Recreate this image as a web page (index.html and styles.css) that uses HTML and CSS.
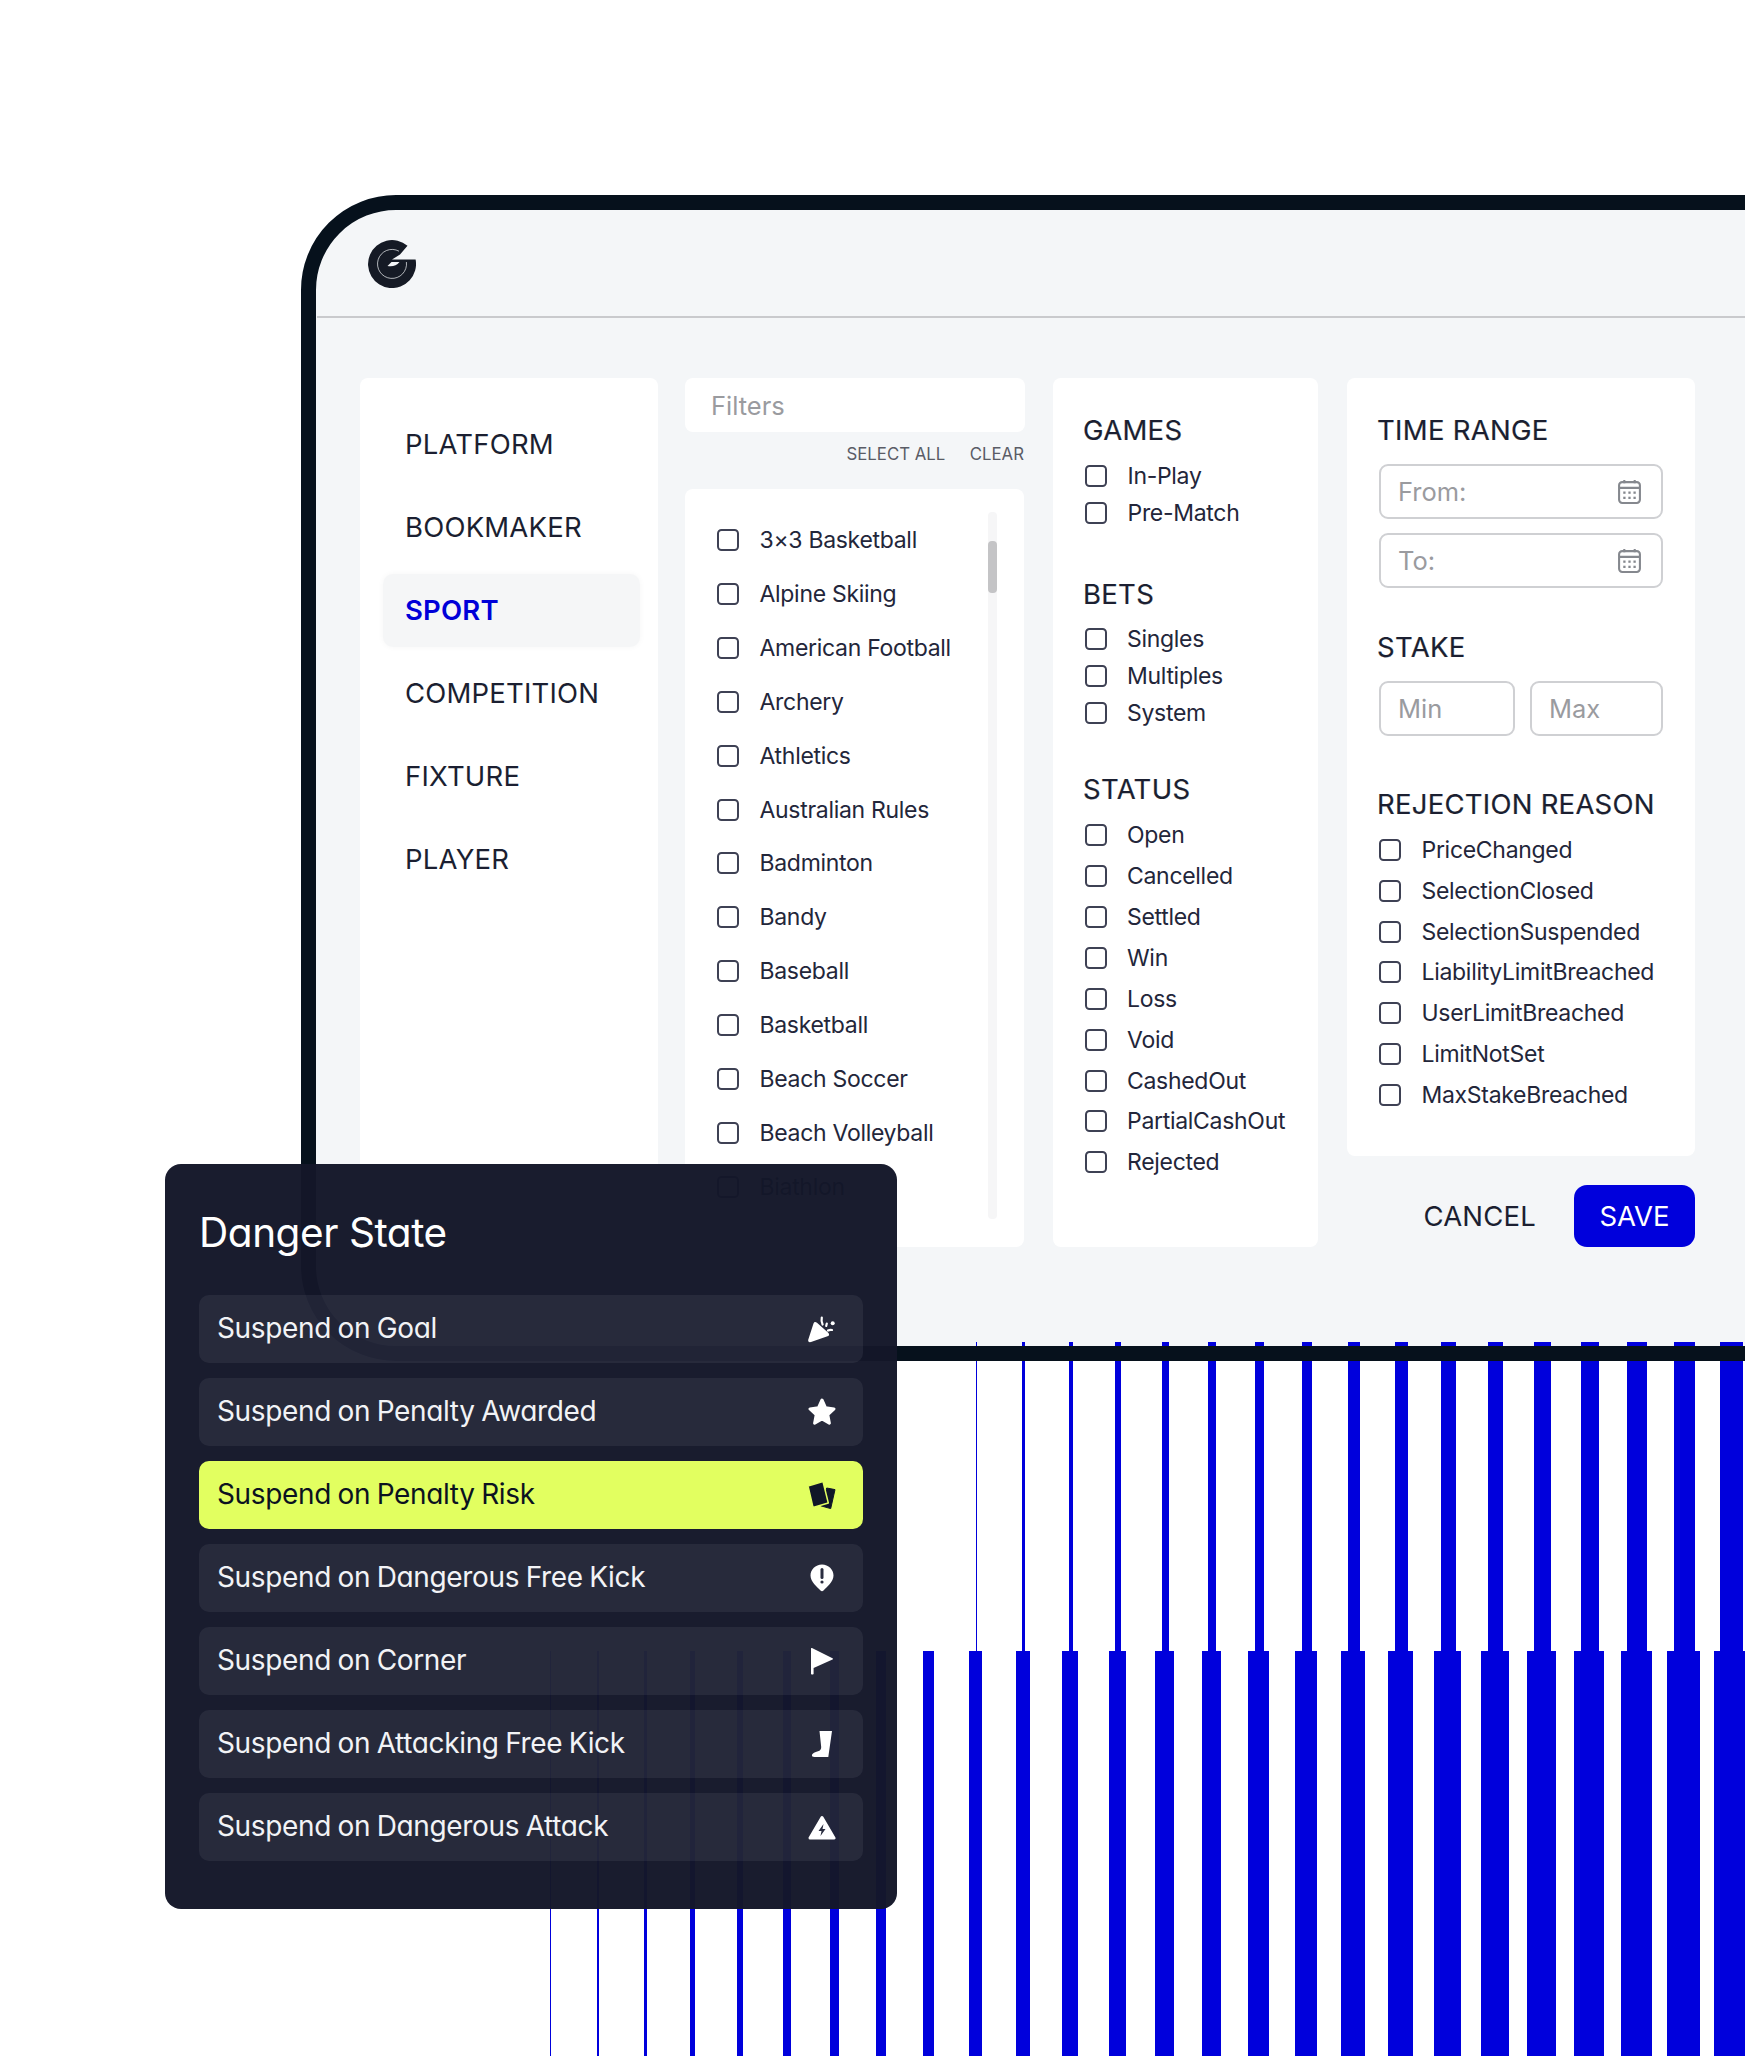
FILE: index.html
```html
<!DOCTYPE html>
<html lang="en">
<head>
<meta charset="utf-8">
<title>Danger State</title>
<link rel="stylesheet" href="styles.css">
</head>
<body>
<div class="stage">
  <div class="frame">
    <header class="topbar">
      <svg class="logo" viewBox="0 0 48 48" aria-hidden="true">
        <path class="logo-g" d="M39.5 5.7A24 24 0 1 0 47.6 19.5H24L32 14.5Z"/>
        <path class="logo-line" d="M31 11.2A14.5 14.5 0 1 0 38.4 22"/>
        <path class="logo-cut" d="M19.5 26L23.5 22H31.5Q27 27.5 19.5 26Z"/>
      </svg>
    </header>
    <main class="columns">
      <nav class="card nav">
        <a class="nav-item">PLATFORM</a>
        <a class="nav-item">BOOKMAKER</a>
        <a class="nav-item active">SPORT</a>
        <a class="nav-item">COMPETITION</a>
        <a class="nav-item">FIXTURE</a>
        <a class="nav-item">PLAYER</a>
      </nav>
      <section class="sports">
        <div class="filter-box">Filters</div>
        <div class="select-row"><span>SELECT ALL</span><span>CLEAR</span></div>
        <div class="card sport-list">
          <div class="scrollbar"><div class="thumb"></div></div>
          <label class="check sport"><i class="box"></i>3×3 Basketball</label>
          <label class="check sport"><i class="box"></i>Alpine Skiing</label>
          <label class="check sport"><i class="box"></i>American Football</label>
          <label class="check sport"><i class="box"></i>Archery</label>
          <label class="check sport"><i class="box"></i>Athletics</label>
          <label class="check sport"><i class="box"></i>Australian Rules</label>
          <label class="check sport"><i class="box"></i>Badminton</label>
          <label class="check sport"><i class="box"></i>Bandy</label>
          <label class="check sport"><i class="box"></i>Baseball</label>
          <label class="check sport"><i class="box"></i>Basketball</label>
          <label class="check sport"><i class="box"></i>Beach Soccer</label>
          <label class="check sport"><i class="box"></i>Beach Volleyball</label>
          <label class="check sport"><i class="box"></i>Biathlon</label>
        </div>
      </section>
      <section class="card types">
        <h2 class="head">GAMES</h2>
        <label class="check games"><i class="box"></i>In-Play</label>
        <label class="check games"><i class="box"></i>Pre-Match</label>
        <h2 class="head bets-head">BETS</h2>
        <label class="check bets"><i class="box"></i>Singles</label>
        <label class="check bets"><i class="box"></i>Multiples</label>
        <label class="check bets"><i class="box"></i>System</label>
        <h2 class="head status-head">STATUS</h2>
        <label class="check status"><i class="box"></i>Open</label>
        <label class="check status"><i class="box"></i>Cancelled</label>
        <label class="check status"><i class="box"></i>Settled</label>
        <label class="check status"><i class="box"></i>Win</label>
        <label class="check status"><i class="box"></i>Loss</label>
        <label class="check status"><i class="box"></i>Void</label>
        <label class="check status"><i class="box"></i>CashedOut</label>
        <label class="check status"><i class="box"></i>PartialCashOut</label>
        <label class="check status"><i class="box"></i>Rejected</label>
      </section>
      <section class="right">
        <div class="card ranges">
          <h2 class="head">TIME RANGE</h2>
          <div class="field date">From:
            <svg class="cal" viewBox="0 0 22 24" aria-hidden="true"><rect x="1" y="3" width="20" height="20" rx="3"/><path d="M1 8.5H21M6 1V4M16 1V4"/><g class="cal-dots"><rect x="5" y="12" width="2.2" height="2.2"/><rect x="9.9" y="12" width="2.2" height="2.2"/><rect x="14.8" y="12" width="2.2" height="2.2"/><rect x="5" y="17" width="2.2" height="2.2"/><rect x="9.9" y="17" width="2.2" height="2.2"/><rect x="14.8" y="17" width="2.2" height="2.2"/></g></svg>
          </div>
          <div class="field date to">To:
            <svg class="cal" viewBox="0 0 22 24" aria-hidden="true"><rect x="1" y="3" width="20" height="20" rx="3"/><path d="M1 8.5H21M6 1V4M16 1V4"/><g class="cal-dots"><rect x="5" y="12" width="2.2" height="2.2"/><rect x="9.9" y="12" width="2.2" height="2.2"/><rect x="14.8" y="12" width="2.2" height="2.2"/><rect x="5" y="17" width="2.2" height="2.2"/><rect x="9.9" y="17" width="2.2" height="2.2"/><rect x="14.8" y="17" width="2.2" height="2.2"/></g></svg>
          </div>
          <h2 class="head stake-head">STAKE</h2>
          <div class="stake-row">
            <div class="field min">Min</div>
            <div class="field max">Max</div>
          </div>
          <h2 class="head reject-head">REJECTION REASON</h2>
          <label class="check status"><i class="box"></i>PriceChanged</label>
          <label class="check status"><i class="box"></i>SelectionClosed</label>
          <label class="check status"><i class="box"></i>SelectionSuspended</label>
          <label class="check status"><i class="box"></i>LiabilityLimitBreached</label>
          <label class="check status"><i class="box"></i>UserLimitBreached</label>
          <label class="check status"><i class="box"></i>LimitNotSet</label>
          <label class="check status"><i class="box"></i>MaxStakeBreached</label>
        </div>
        <div class="actions">
          <span class="cancel">CANCEL</span>
          <span class="save">SAVE</span>
        </div>
      </section>
    </main>
  </div>

  <div class="bars bars-upper">
    <i style="width:1.5px"></i><i style="width:2.8px"></i><i style="width:4.1px"></i><i style="width:5.4px"></i><i style="width:6.7px"></i><i style="width:8px"></i><i style="width:9.3px"></i><i style="width:10.6px"></i><i style="width:11.9px"></i><i style="width:13.2px"></i><i style="width:14.5px"></i><i style="width:15.8px"></i><i style="width:17.1px"></i><i style="width:18.4px"></i><i style="width:19.7px"></i><i style="width:21px"></i><i style="width:22.3px"></i>
  </div>
  <div class="bars bars-lower">
    <i style="width:1px"></i><i style="width:2.3px"></i><i style="width:3.7px"></i><i style="width:5px"></i><i style="width:6.3px"></i><i style="width:7.7px"></i><i style="width:9px"></i><i style="width:10.3px"></i><i style="width:11.6px"></i><i style="width:13px"></i><i style="width:14.3px"></i><i style="width:15.6px"></i><i style="width:17px"></i><i style="width:18.3px"></i><i style="width:19.6px"></i><i style="width:21px"></i><i style="width:22.3px"></i><i style="width:23.6px"></i><i style="width:25px"></i><i style="width:26.3px"></i><i style="width:27.6px"></i><i style="width:29px"></i><i style="width:30.3px"></i><i style="width:31.6px"></i><i style="width:33px"></i><i style="width:34.3px"></i>
  </div>
  <div class="frame-edge"></div>

  <aside class="panel">
    <h1 class="panel-title">Danger State</h1>
    <div class="rows">
      <div class="row"><span class="row-text">Suspend on Goal</span>
        <svg class="ico" viewBox="0 0 28 28" aria-hidden="true">
          <path class="fill" d="M5.5 8.5Q6.5 6 9 7.8L20.5 18Q22 20.5 19.5 21.3L3 27Q-.5 27.8 .3 24.5Z"/>
          <path class="streak" d="M13.8 2.5Q13 6 14.6 9.5M18.8 8.5L18.2 11M20 15.5Q22 14.5 24 15"/>
          <circle class="fill" cx="24.7" cy="8.3" r="2"/>
        </svg>
      </div>
      <div class="row"><span class="row-text">Suspend on Penalty Awarded</span>
        <svg class="ico" viewBox="0 0 28 28" aria-hidden="true">
          <path class="fill soft" d="M14 2L17.6 9.8L26 10.9L19.8 16.7L21.4 25.2L14 21L6.6 25.2L8.2 16.7L2 10.9L10.4 9.8Z"/>
        </svg>
      </div>
      <div class="row hot"><span class="row-text">Suspend on Penalty Risk</span>
        <svg class="ico" viewBox="0 0 28 28" aria-hidden="true">
          <path class="card-back" d="M18.7 7L27 8.6L22.7 27.6L12.7 24.8Z"/>
          <path class="card-front" d="M0 5L15 .5L20.3 22L5 26.5Z"/>
        </svg>
      </div>
      <div class="row"><span class="row-text">Suspend on Dangerous Free Kick</span>
        <svg class="ico" viewBox="0 0 28 28" aria-hidden="true">
          <path class="fill" d="M14 0.5C20.5 0.5 25.5 5.5 25.5 11.5C25.5 17.5 19 23 15.5 26.5Q14 27.8 12.5 26.5C9 23 2.5 17.5 2.5 11.5C2.5 5.5 7.5 0.5 14 0.5Z"/>
          <path class="notch-line" d="M14 5.5V13.5"/>
          <circle class="notch" cx="14" cy="18" r="1.6"/>
        </svg>
      </div>
      <div class="row"><span class="row-text">Suspend on Corner</span>
        <svg class="ico" viewBox="0 0 28 28" aria-hidden="true">
          <path class="fill" d="M3 1.5Q3 .6 4 1.1L24.5 11.3Q25.8 12 24.5 12.6L5.6 21V27Q4.3 28 3 27Z"/>
        </svg>
      </div>
      <div class="row"><span class="row-text">Suspend on Attacking Free Kick</span>
        <svg class="ico" viewBox="0 0 28 28" aria-hidden="true">
          <path class="fill" d="M11.5 1H24L20.3 27H6.5Q3.5 27 4 24.8Q5 22.3 10 21.2Q13.3 20.4 13.2 17Z"/>
        </svg>
      </div>
      <div class="row"><span class="row-text">Suspend on Dangerous Attack</span>
        <svg class="ico" viewBox="0 0 28 28" aria-hidden="true">
          <path class="fill soft" d="M14 4.5L26 25H2Z"/>
          <path class="notch" d="M15.5 11L10.5 18H13.5L12.5 23L17.5 16H14.5Z"/>
        </svg>
      </div>
    </div>
  </aside>
</div>
</body>
</html>
```

FILE: styles.css
```css
* { box-sizing: border-box; }
html, body { margin: 0; padding: 0; background: #fff; }
body { font-family: Inter, "Liberation Sans", sans-serif; color: #1b1f31; }

.stage {
  position: relative;
  width: 1745px;
  height: 2056px;
  overflow: hidden;
  background: #fff;
}

/* device frame */
.frame {
  position: absolute;
  left: 301px;
  top: 195px;
  width: 1560px;
  height: 1166px;
  padding: 15.5px;
  border-radius: 95px;
  background: #f4f6f8;
}
.frame-edge {
  position: absolute;
  left: 301px;
  top: 195px;
  width: 1560px;
  height: 1166px;
  border: 15.5px solid #06111c;
  border-radius: 95px;
}

.topbar {
  height: 107.5px;
  padding-left: 51.5px;
  display: flex;
  align-items: center;
  border-bottom: 2px solid #c9cacd;
}
.logo { width: 48px; height: 48px; margin-top: 2px; }
.logo-g { fill: #151a25; }
.logo-line { fill: none; stroke: #f4f6f8; stroke-width: .7; }
.logo-cut { fill: #f4f6f8; }

.columns {
  display: flex;
  align-items: flex-start;
  padding: 60px 0 0 43.5px;
}
.card { background: #fff; border-radius: 8px; }

/* nav */
.nav {
  width: 298px;
  height: 869px;
  padding: 30px 18px 0 23px;
  display: flex;
  flex-direction: column;
  gap: 10px;
  flex: none;
}
.nav-item {
  height: 73px;
  display: flex;
  align-items: center;
  padding: 0 0 2px 22px;
  font-size: 27.5px;
  letter-spacing: .2px;
  border-radius: 10px;
}
.nav-item.active {
  color: #0000d8;
  font-weight: 600;
  background: #f5f6f7;
  box-shadow: 0 0 6px rgba(0, 0, 0, .04);
}

/* sports column */
.sports { width: 340px; margin-left: 27px; flex: none; }
.filter-box {
  height: 54px;
  padding-left: 26px;
  display: flex;
  align-items: center;
  font-size: 25.5px;
  color: #9a9b9f;
  background: #fff;
  border-radius: 8px;
}
.select-row {
  height: 57px;
  padding: 0 1px 14px 0;
  display: flex;
  justify-content: flex-end;
  align-items: center;
  gap: 24.5px;
  font-size: 16.8px;
  color: #5a5c66;
}
.sport-list {
  position: relative;
  width: 339px;
  height: 758px;
  padding: 24.5px 0 0 32px;
}
.scrollbar {
  position: absolute;
  left: 303px;
  top: 23px;
  width: 8.5px;
  height: 707px;
  border-radius: 4px;
  background: #f6f6f7;
}
.thumb {
  margin-top: 29px;
  height: 52px;
  border-radius: 4px;
  background: #c4c4c6;
}

/* checks */
.check {
  display: flex;
  align-items: center;
  gap: 20.5px;
  font-size: 23px;
  letter-spacing: -.3px;
  color: #23263a;
}
.box {
  width: 22px;
  height: 22px;
  flex: none;
  border: 2px solid #3e4154;
  border-radius: 4.5px;
}
.sport { height: 53.85px; }
.games { height: 36.8px; }
.bets { height: 36.6px; }
.status { height: 40.85px; }

/* headings */
.head {
  margin: 0;
  height: 30px;
  line-height: 30px;
  font-size: 27.5px;
  font-weight: 400;
  letter-spacing: .3px;
  color: #1b1f31;
  -webkit-text-stroke: .2px #1b1f31;
}
.types {
  width: 265px;
  height: 869px;
  margin-left: 27.5px;
  padding: 37px 0 0 32px;
  flex: none;
}
.types .head { margin-left: -1.5px; margin-bottom: 12.6px; }
.types .games { gap: 21px; }
.types .bets-head { margin-top: 48px; margin-bottom: 12px; }
.types .status-head { margin-top: 43.5px; margin-bottom: 10.6px; }

/* right column */
.right { width: 348px; margin-left: 29.5px; flex: none; }
.ranges { height: 778px; padding: 37px 32px 0; }
.ranges .head { margin-left: -2px; margin-bottom: 19px; }
.ranges .stake-head { margin-top: 44px; }
.ranges .reject-head { margin-top: 52.5px; margin-bottom: 10.9px; letter-spacing: .25px; }
.field {
  height: 55px;
  padding-left: 17px;
  display: flex;
  align-items: center;
  justify-content: space-between;
  font-size: 25.5px;
  color: #9a9b9f;
  background: #fff;
  border: 2px solid #cfd0d3;
  border-radius: 9px;
}
.date { padding-right: 20px; }
.to { margin-top: 14px; }
.cal { width: 23px; height: 25px; }
.cal rect, .cal path { fill: none; stroke: #85888e; stroke-width: 2; }
.cal .cal-dots rect { fill: #85888e; stroke: none; }
.stake-row { display: flex; gap: 15px; }
.min { width: 136px; flex: none; }
.max { flex: 1; }

.actions {
  margin-top: 29px;
  display: flex;
  justify-content: flex-end;
  align-items: center;
  gap: 38px;
}
.cancel { font-size: 27.5px; letter-spacing: .2px; }
.save {
  width: 121px;
  height: 62px;
  display: flex;
  align-items: center;
  justify-content: center;
  font-size: 27.5px;
  color: #fff;
  background: #0000dc;
  border-radius: 13px;
}

/* bars */
.bars {
  position: absolute;
  display: grid;
  grid-auto-flow: column;
  grid-auto-columns: 47.2px;
  justify-items: center;
}
.bars i { display: block; height: 100%; background: #0000dc; }
.bars-upper { left: 952.9px; top: 1342px; height: 309px; }
.bars-lower { left: 527.4px; top: 1651px; height: 405px; }

/* danger panel */
.panel {
  position: absolute;
  left: 165px;
  top: 1164px;
  width: 732px;
  height: 745px;
  padding: 46px 34px 0;
  background: rgba(19, 23, 41, .975);
  border-radius: 16px;
}
.panel-title {
  margin: 0 0 39px;
  height: 46px;
  line-height: 46px;
  font-size: 40.5px;
  font-weight: 400;
  letter-spacing: -.45px;
  color: #fff;
  font-feature-settings: "cv11";
}
.rows { display: flex; flex-direction: column; gap: 15px; }
.row {
  height: 68px;
  padding: 0 27.5px 2px 18px;
  display: flex;
  align-items: center;
  justify-content: space-between;
  font-size: 28px;
  letter-spacing: -.35px;
  word-spacing: -1px;
  color: #f2f3f6;
  font-feature-settings: "cv11";
  background: rgba(235, 235, 255, .065);
  border-radius: 10px;
}
.row.hot { color: #0b1220; background: #e2ff60; }
.ico { width: 28px; height: 28px; flex: none; margin-top: 2px; }
.ico .fill { fill: #fff; }
.ico .soft { stroke: #fff; stroke-width: 3; stroke-linejoin: round; }
.ico .streak { fill: none; stroke: #fff; stroke-width: 2.2; stroke-linecap: round; }
.ico .notch { fill: #2a2d40; }
.ico .notch-line { fill: none; stroke: #2a2d40; stroke-width: 3; stroke-linecap: round; }
.card-back { fill: #101728; stroke: #101728; stroke-width: 1; stroke-linejoin: round; }
.card-front { fill: #101728; stroke: #e2ff60; stroke-width: 1.5; stroke-linejoin: round; }
```
